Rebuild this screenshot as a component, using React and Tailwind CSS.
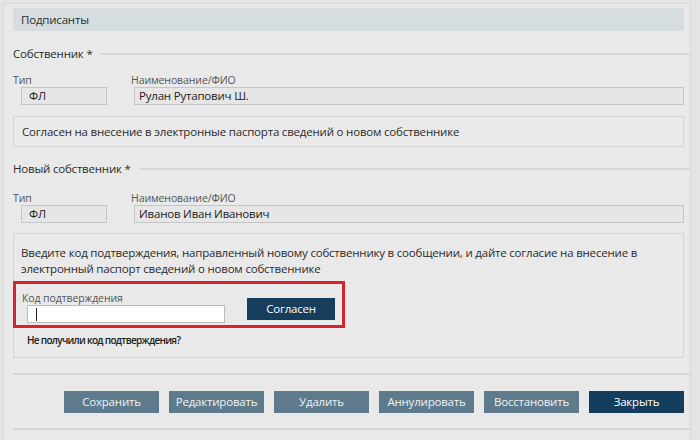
import React from 'react';

const font = { fontFamily: '"Open Sans", "Liberation Sans", sans-serif' };

const SectionTitle = ({ children, className = '' }) => (
  <div className={`flex items-center h-[16px] -mr-[6px] ${className}`}>
    <span className="text-[11.5px] tracking-[-0.2px] text-[#2b2b2b] whitespace-nowrap">{children}</span>
    <div className="flex-1 h-[2px] bg-[#d8d8d8] ml-[8px]" />
  </div>
);

const OwnerFields = ({ name, className = '', inputTop = 'mt-[3px]' }) => (
  <div className={`flex ${className}`}>
    <div className="w-[118px] shrink-0">
      <div className="text-[10.5px] tracking-[-0.1px] leading-[12px] text-[#555]">Тип</div>
      <div className={`${inputTop} ml-[8px] w-[86px] h-[18px] border border-[#c6c6c6] bg-[#e6e6e6] flex items-center pl-[7px] text-[11.5px] tracking-[-0.2px] text-[#222]`}>
        ФЛ
      </div>
    </div>
    <div className="flex-1">
      <div className="text-[10.5px] tracking-[-0.1px] leading-[12px] text-[#555]">Наименование/ФИО</div>
      <div className={`${inputTop} ml-[3px] h-[18px] border border-[#c6c6c6] bg-[#e6e6e6] flex items-center pl-[4px] text-[11.5px] tracking-[-0.2px] text-[#222]`}>
        {name}
      </div>
    </div>
  </div>
);

const actions = ['Сохранить', 'Редактировать', 'Удалить', 'Аннулировать', 'Восстановить'];

export default function App() {
  return (
    <div style={font} className="w-[700px] h-[440px] overflow-hidden bg-[#e4e4e4] pt-[3px] pl-[3px]">
      <div className="w-[688px] h-[437px] border-l border-t border-r border-[#d9d9d9] bg-[#e9e9e9] pl-[9px] pr-[6px] pt-[4px]">
        <div className="h-[23px] bg-[#d6dde0] flex items-center pl-[8px] text-[11.5px] tracking-[-0.2px] text-[#2b2b2b]">
          Подписанты
        </div>

        <SectionTitle className="mt-[15px]">Собственник *</SectionTitle>
        <OwnerFields name="Рулан Рутапович Ш." className="mt-[12px]" inputTop="mt-[1px]" />

        <div className="mt-[11px] h-[31px] border border-[#d4d4d4] flex items-center pl-[8px] text-[11.5px] tracking-[-0.2px] text-[#2b2b2b]">
          Согласен на внесение в электронные паспорта сведений о новом собственнике
        </div>

        <SectionTitle className="mt-[14px]">Новый собственник *</SectionTitle>
        <OwnerFields name="Иванов Иван Иванович" className="mt-[15px]" inputTop="mt-[1px]" />

        <div className="mt-[10px] h-[125px] border border-[#d4d4d4] pt-[11px]">
          <p className="pl-[7px] pr-[20px] text-[11.5px] tracking-[-0.2px] leading-[16px] text-[#2b2b2b]">
            Введите код подтверждения, направленный новому собственнику в сообщении, и дайте согласие на внесение в электронный паспорт сведений о новом собственнике
          </p>
          <div className="mt-[4px] -ml-[1px] w-[332px] h-[47px] border-[3px] border-[#d8232f] flex items-start pl-[6px] pt-[8px]">
            <div>
              <div className="text-[10.5px] tracking-[-0.1px] leading-[12px] text-[#555]">Код подтверждения</div>
              <div className="mt-[1px] ml-[5px] w-[198px] h-[18px] bg-white border border-[#bdbdbd] flex items-center pl-[8px]">
                <div className="w-[1px] h-[13px] bg-[#222]" />
              </div>
            </div>
            <button className="ml-[22px] mt-[6px] w-[88px] h-[22px] bg-[#163d5c] text-white text-[11.5px] tracking-[-0.2px] flex items-center justify-center">
              Согласен
            </button>
          </div>
          <div className="mt-[5px] pl-[13px] text-[10px] font-semibold tracking-[-0.7px] text-[#222]">
            Не получили код подтверждения?
          </div>
        </div>

        <div className="mt-[15px] -mr-[6px] h-[2px] bg-[#d6d6d6]" />
        <div className="mt-[16px] flex justify-end gap-[10px]">
          {actions.map((a) => (
            <button key={a} className="w-[95px] h-[22px] bg-[#5d7b8d] text-[#eef2f4] text-[11.5px] tracking-[-0.2px] flex items-center justify-center">
              {a}
            </button>
          ))}
          <button className="w-[95px] h-[22px] bg-[#143c5d] text-white text-[11.5px] tracking-[-0.2px] flex items-center justify-center">
            Закрыть
          </button>
        </div>
        <div className="mt-[15px] -mr-[6px] h-[2px] bg-[#d6d6d6]" />
      </div>
    </div>
  );
}
